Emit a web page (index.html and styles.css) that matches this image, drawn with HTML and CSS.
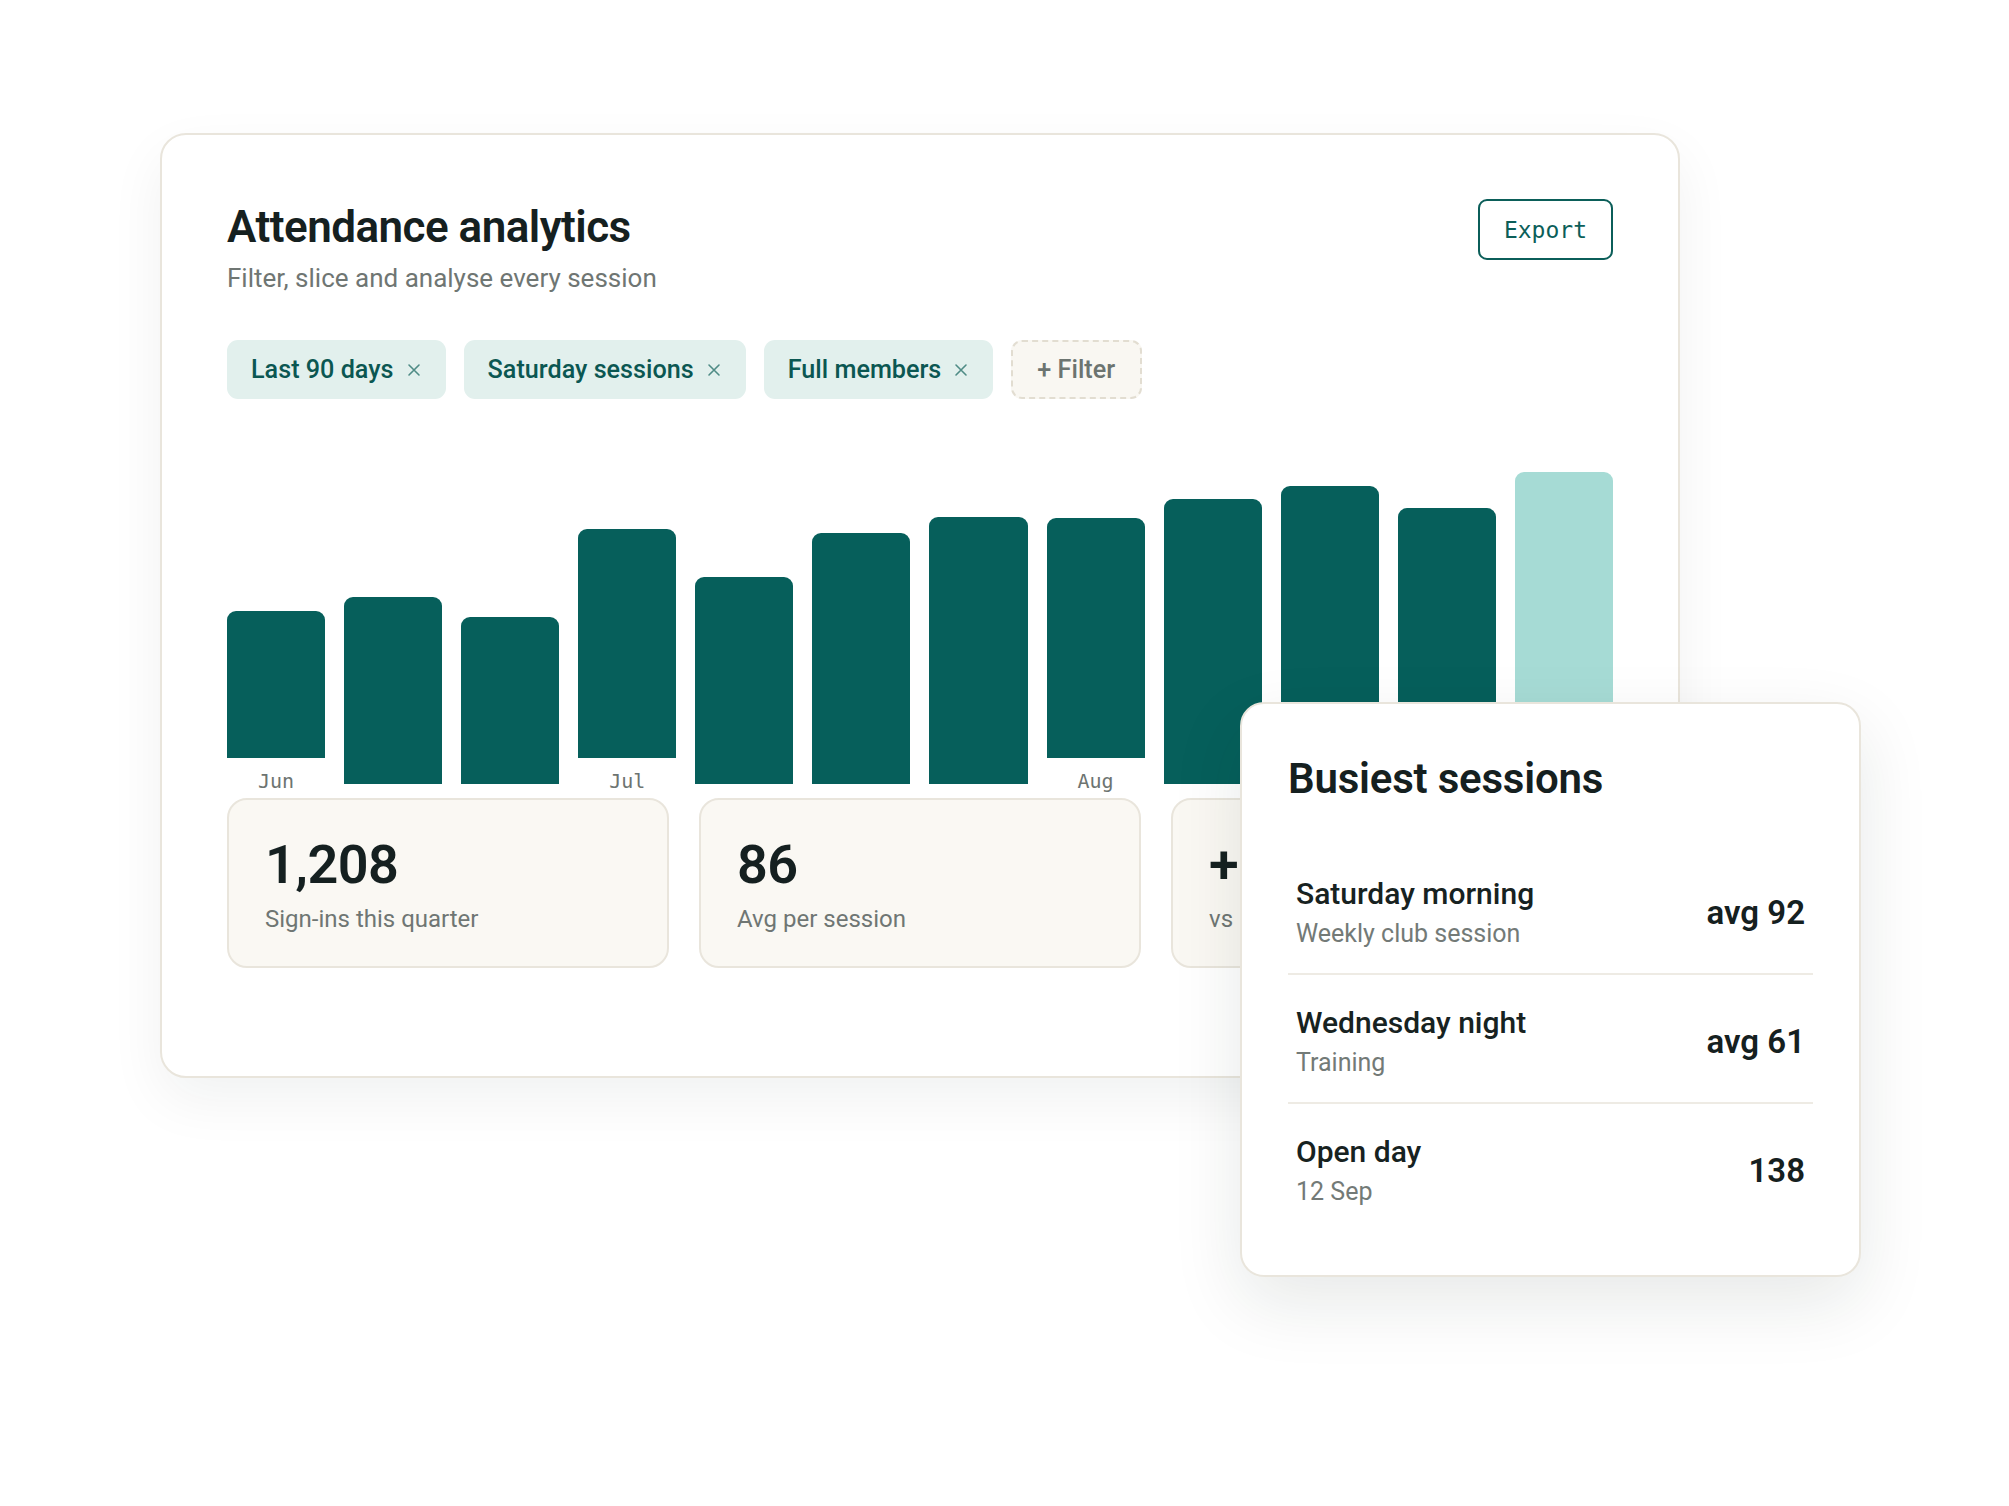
FILE: index.html
```html
<!DOCTYPE html>
<html lang="en">
<head>
<meta charset="utf-8">
<title>Attendance analytics</title>
<link rel="stylesheet" href="styles.css">
</head>
<body>
<div class="stage">
  <section class="card">
    <header class="card-head">
      <div class="head-text">
        <h1 class="title">Attendance analytics</h1>
        <p class="subtitle">Filter, slice and analyse every session</p>
      </div>
      <button class="export" type="button">Export</button>
    </header>

    <div class="chips">
      <span class="chip">Last 90 days<svg class="chip-x" viewBox="0 0 14 14" aria-hidden="true"><path d="M2 2 L12 12 M12 2 L2 12"/></svg></span>
      <span class="chip">Saturday sessions<svg class="chip-x" viewBox="0 0 14 14" aria-hidden="true"><path d="M2 2 L12 12 M12 2 L2 12"/></svg></span>
      <span class="chip">Full members<svg class="chip-x" viewBox="0 0 14 14" aria-hidden="true"><path d="M2 2 L12 12 M12 2 L2 12"/></svg></span>
      <span class="chip chip-add">+ Filter</span>
    </div>

    <div class="chart">
      <div class="col labeled"><div class="bar" style="height:147px"></div><span class="month">Jun</span></div>
      <div class="col"><div class="bar" style="height:187px"></div></div>
      <div class="col"><div class="bar" style="height:167px"></div></div>
      <div class="col labeled"><div class="bar" style="height:229px"></div><span class="month">Jul</span></div>
      <div class="col"><div class="bar" style="height:207px"></div></div>
      <div class="col"><div class="bar" style="height:251px"></div></div>
      <div class="col"><div class="bar" style="height:267px"></div></div>
      <div class="col labeled"><div class="bar" style="height:240px"></div><span class="month">Aug</span></div>
      <div class="col"><div class="bar" style="height:285px"></div></div>
      <div class="col"><div class="bar" style="height:298px"></div></div>
      <div class="col"><div class="bar" style="height:276px"></div></div>
      <div class="col"><div class="bar bar-current" style="height:312px"></div></div>
    </div>

    <div class="stats">
      <div class="stat">
        <div class="stat-value">1,208</div>
        <div class="stat-label">Sign-ins this quarter</div>
      </div>
      <div class="stat">
        <div class="stat-value">86</div>
        <div class="stat-label">Avg per session</div>
      </div>
      <div class="stat">
        <div class="stat-value">+12%</div>
        <div class="stat-label">vs last quarter</div>
      </div>
    </div>
  </section>

  <aside class="panel">
    <h2 class="panel-title">Busiest sessions</h2>
    <ul class="sessions">
      <li class="session">
        <div class="session-text">
          <div class="session-name">Saturday morning</div>
          <div class="session-sub">Weekly club session</div>
        </div>
        <div class="session-value">avg 92</div>
      </li>
      <li class="session">
        <div class="session-text">
          <div class="session-name">Wednesday night</div>
          <div class="session-sub">Training</div>
        </div>
        <div class="session-value">avg 61</div>
      </li>
      <li class="session">
        <div class="session-text">
          <div class="session-name">Open day</div>
          <div class="session-sub">12 Sep</div>
        </div>
        <div class="session-value">138</div>
      </li>
    </ul>
  </aside>
</div>
</body>
</html>
```

FILE: styles.css
```css
* {
  box-sizing: border-box;
}

html,
body {
  margin: 0;
  padding: 0;
  background: #ffffff;
}

body {
  font-family: Roboto, "Noto Sans", "Liberation Sans", sans-serif;
  color: #162120;
}

.stage {
  position: relative;
  width: 2009px;
  height: 1506px;
  padding: 133px 0 0 160px;
}

/* ---------- main card ---------- */
.card {
  width: 1520px;
  background: #ffffff;
  border: 2px solid #e9e5dc;
  border-radius: 26px;
  padding: 66px 65px 108px 65px;
  box-shadow: 0 22px 56px rgba(24, 36, 33, 0.06);
}

.card-head {
  display: flex;
  justify-content: space-between;
  align-items: flex-start;
}

.title {
  margin: 0;
  font-size: 44px;
  line-height: 1.2;
  font-weight: 600;
  letter-spacing: -0.012em;
  color: #152020;
}

.subtitle {
  margin: 6px 0 0;
  font-size: 26px;
  line-height: 1.4;
  font-weight: 400;
  color: #6f7673;
}

.export {
  margin-top: -2px;
  height: 61px;
  padding: 0 24px;
  background: #ffffff;
  border: 2px solid #0b5e59;
  border-radius: 9px;
  font-family: "DejaVu Sans Mono", "Liberation Mono", monospace;
  font-size: 23px;
  font-weight: 400;
  color: #0b5e59;
}

/* ---------- chips ---------- */
.chips {
  display: flex;
  gap: 18px;
  margin-top: 44px;
}

.chip {
  display: inline-flex;
  align-items: center;
  gap: 13px;
  height: 59px;
  padding: 0 25px 0 24px;
  border-radius: 11px;
  background: #e2f0ed;
  color: #0b5752;
  font-size: 25.2px;
  font-weight: 500;
}

.chip-x {
  width: 14px;
  height: 14px;
  fill: none;
  stroke: #4f8c86;
  stroke-width: 1.6;
  stroke-linecap: round;
}

.chip-add {
  background: #f9f7f2;
  border: 2px dashed #e2ddd1;
  color: #6c7470;
  padding: 0 25px 0 24px;
}

/* ---------- chart ---------- */
.chart {
  display: flex;
  align-items: flex-end;
  gap: 19px;
  height: 395px;
}

.col {
  flex: 1 1 0;
  display: flex;
  flex-direction: column;
  align-items: stretch;
  margin-bottom: 10px;
}

.col.labeled {
  margin-bottom: 0;
}

.bar {
  background: #065f5b;
  border-radius: 9px 9px 0 0;
}

.bar-current {
  background: #a6dbd5;
}

.month {
  margin-top: 10px;
  height: 26px;
  line-height: 26px;
  text-align: center;
  font-family: "DejaVu Sans Mono", "Liberation Mono", monospace;
  font-size: 20px;
  color: #6d7471;
}

/* ---------- stats ---------- */
.stats {
  display: grid;
  grid-template-columns: repeat(3, 1fr);
  gap: 30px;
  margin-top: 4px;
}

.stat {
  background: #faf8f3;
  border: 2px solid #e9e5dc;
  border-radius: 20px;
  padding: 35px 36px 30px;
  overflow: hidden;
  white-space: nowrap;
}

.stat-value {
  font-size: 54px;
  line-height: 1.1;
  font-weight: 600;
  letter-spacing: -0.01em;
  color: #152020;
}

.stat-label {
  margin-top: 8px;
  font-size: 24px;
  line-height: 1.4;
  color: #6f7673;
}

/* ---------- floating panel ---------- */
.panel {
  position: absolute;
  left: 1240px;
  top: 702px;
  width: 621px;
  background: #ffffff;
  border: 2px solid #e9e5dc;
  border-radius: 24px;
  padding: 50px 46px 44px;
  box-shadow: 0 26px 70px rgba(24, 36, 33, 0.10);
}

.panel-title {
  margin: 0 0 42px;
  font-size: 42px;
  line-height: 1.2;
  font-weight: 600;
  letter-spacing: -0.005em;
  color: #152020;
}

.sessions {
  list-style: none;
  margin: 0;
  padding: 0;
}

.session {
  display: flex;
  align-items: center;
  justify-content: space-between;
  padding: 28px 8px 22px;
  border-bottom: 2px solid #eeebe4;
}

.session:last-child {
  border-bottom: none;
}

.session-name {
  font-size: 30px;
  line-height: 1.3;
  font-weight: 500;
  color: #172221;
}

.session-sub {
  margin-top: 3px;
  font-size: 25px;
  line-height: 1.4;
  color: #737a77;
}

.session-value {
  font-size: 33px;
  font-weight: 600;
  color: #152020;
}
```
